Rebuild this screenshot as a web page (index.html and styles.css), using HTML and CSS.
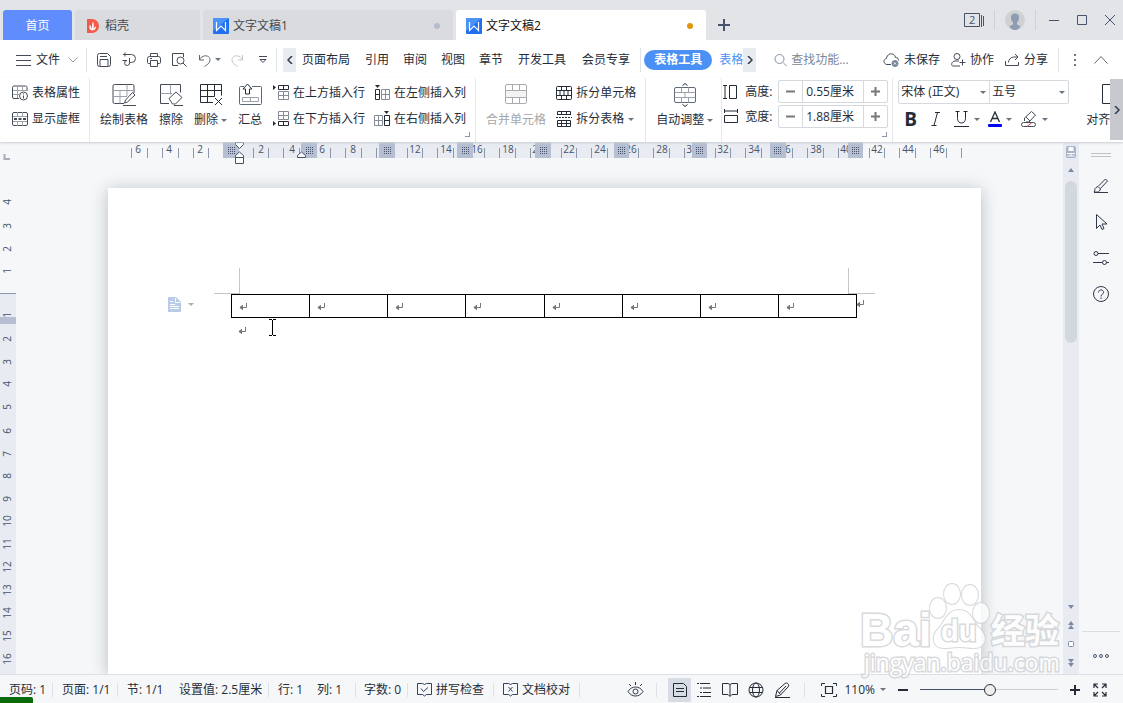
FILE: index.html
```html
<!DOCTYPE html>
<html lang="zh-CN">
<head>
<meta charset="utf-8">
<title>文字文稿2</title>
<link rel="stylesheet" href="styles.css">
</head>
<body>
<svg class="defs" aria-hidden="true">
  <symbol id="mark" viewBox="0 0 8 8"><path d="M7.500 0v4.500H1M3.500 2.500v4L1 4.500z" fill="#777" fill-opacity="0" stroke="#777"/><path d="M4 2v5L.5 4.500z" fill="#777"/></symbol>
  <symbol id="wlogo" viewBox="0 0 16 16"><rect width="16" height="16" rx="1" fill="#1f6ff0"/><path d="M0 0h16L0 13z" fill="#4a94f8"/><path d="M3.500 4v8.500L8 8l4.500 4.500V4" fill="none" stroke="#fff" stroke-width="1.200"/></symbol>
</svg>
<div class="app">
  <header class="titlebar">
    <button class="tab tab-home">首页</button>
    <button class="tab tab-store"><svg width="14" height="16" viewBox="0 0 14 16"><path d="M1 1h5a7 7 0 0 1 0 14H1z" fill="#f25a4a"/><path d="M6 12.500c-3-1-3-4-2-6 .5 2 1.500 2 2 5 0-4 0-6 1-8 1 2 1 5 .5 8 .5-2 1.500-2 2.500-3.500 0 3-1 4-4 4.500z" fill="#fff"/></svg>稻壳</button>
    <button class="tab tab-doc"><svg width="16" height="16"><use href="#wlogo"/></svg><span>文字文稿1</span><i class="dot"></i></button>
    <button class="tab tab-doc active"><svg width="16" height="16"><use href="#wlogo"/></svg><span>文字文稿2</span><i class="dot"></i></button>
    <button class="new-tab" aria-label="新建"><svg width="12" height="12"><path d="M6 0v12M0 6h12" stroke="#46536b" stroke-width="2"/></svg></button>
    <div class="window-tools">
      <button aria-label="窗口列表"><svg width="21" height="15" viewBox="0 0 21 15" fill="none" stroke="#46536b"><path d="M.5.500h15v13H.500zM17.500 2v12M19.500 3v10"/><text x="5" y="11" font-size="11" fill="#46536b" stroke="none">2</text></svg></button>
      <i class="sep"></i>
      <button aria-label="账户"><svg width="20" height="20" viewBox="0 0 20 20"><circle cx="10" cy="10" r="10" fill="#d0d1d3"/><path d="M10 3.500c3 0 4.500 2 4 5-.3 2-1 3-2 4v2l3.500 1.500c-1 2.500-3 4-5.500 4s-5-1.500-5.500-4L8 14.500v-2c-1-1-1.700-2-2-4-.5-3 1-5 4-5z" fill="#8f9db2"/></svg></button>
      <i class="sep"></i>
      <button aria-label="最小化"><svg width="12" height="12"><path d="M1 6.500h10" stroke="#46536b"/></svg></button>
      <button aria-label="最大化"><svg width="12" height="12"><path d="M1.500 1.500h9v9h-9z" fill="none" stroke="#46536b"/></svg></button>
      <button aria-label="关闭"><svg width="12" height="12"><path d="M1 1l10 10M11 1L1 11" stroke="#46536b"/></svg></button>
    </div>
  </header>

  <nav class="menubar">
    <button class="file"><svg width="15" height="12"><path d="M0 1.500h15M0 6.500h15M0 11.500h15" stroke="#444b57"/></svg>文件<svg class="file-chev" width="10" height="6"><path d="M.5.500L5 5 9.500.500" fill="none" stroke="#9aa0a8"/></svg></button>
    <i class="sep"></i>
    <div class="quick">
      <button aria-label="保存"><svg width="16" height="16" viewBox="0 0 16 16" fill="none" stroke="#444b57"><path d="M1.500 3.500a2 2 0 0 1 2-2h8l3 3v8a2 2 0 0 1-2 2h-9a2 2 0 0 1-2-2zM4 14V7.500h8V14M4 4.500h7"/></svg></button>
      <button aria-label="输出"><svg width="16" height="16" viewBox="0 0 16 16" fill="none" stroke="#444b57"><path d="M2 2.500h8.500a4 4 0 0 1 0 8H8.500V6M8.500 10.500a2.500 2.500 0 1 1-2.500-2M1.500 8.500H6M4 .500v4"/></svg></button>
      <button aria-label="打印"><svg width="16" height="16" viewBox="0 0 16 16" fill="none" stroke="#444b57"><path d="M4.500 5V1.500h7V5M4 11.500H2.500a1 1 0 0 1-1-1V6.500a2 2 0 0 1 2-2h9a2 2 0 0 1 2 2v4a1 1 0 0 1-1 1H12M4.500 8.500h7v6h-7zM4 6.500h2"/></svg></button>
      <button aria-label="打印预览"><svg width="16" height="16" viewBox="0 0 16 16" fill="none" stroke="#444b57"><path d="M7 13.500H1.500v-12h11V5"/><circle cx="9.500" cy="8.500" r="3.500"/><path d="M12 11l3.500 3.500"/></svg></button>
      <button class="with-caret" aria-label="撤销"><svg width="14" height="16" viewBox="0 0 14 16" fill="none" stroke="#5f6875"><path d="M1.500 3v5H6M1.500 8C4 2 12 3 12 7.500S8 13 6.500 14.500"/></svg><i class="caret"></i></button>
      <button aria-label="恢复"><svg width="14" height="16" viewBox="0 0 14 16" fill="none" stroke="#c3c7cd"><path d="M12.500 3v5H8M12.500 8C10 2 2 3 2 7.500S6 13 7.500 14.500"/></svg></button>
      <button aria-label="自定义"><svg width="10" height="8" viewBox="0 0 10 8" fill="none" stroke="#444b57"><path d="M1 .500h8M2 3.500l3 3 3-3z"/></svg></button>
    </div>
    <i class="sep"></i>
    <button class="scroll-tab" aria-label="向左"><svg width="6" height="8"><path d="M5 0L1 4l4 4" fill="none" stroke="#30394a" stroke-width="1.500"/></svg></button>
    <div class="tabs">
      <button class="wide">页面布局</button><button>引用</button><button>审阅</button><button>视图</button><button>章节</button><button class="wide">开发工具</button><button class="wide">会员专享</button>
    </div>
    <i class="sep"></i>
    <button class="pill">表格工具</button>
    <button class="more-tab">表格</button>
    <button class="scroll-tab" aria-label="向右"><svg width="6" height="8"><path d="M1 0l4 4-4 4" fill="none" stroke="#30394a" stroke-width="1.500"/></svg></button>
    <label class="search"><svg width="13" height="14" viewBox="0 0 13 14" fill="none" stroke="#8791a3"><circle cx="5.500" cy="6" r="4.500"/><path d="M9 9.500l3.500 3.500"/></svg><input type="text" placeholder="查找功能..." aria-label="查找功能"></label>
    <div class="share">
      <button><svg width="17" height="14" viewBox="0 0 17 14" fill="none" stroke="#444b57"><path d="M8 11.500H4C0 11 0 6 3.500 5.500 4-.500 12-.500 12.500 4.500c2 0 3 1 3 3"/><circle cx="12" cy="10.500" r="3" fill="#7a8499" stroke="#7a8499"/><path d="M11 9.500l2 2M13 9.500l-2 2" stroke="#fff"/></svg>未保存</button>
      <button><svg width="15" height="14" viewBox="0 0 15 14" fill="none" stroke="#444b57"><circle cx="6" cy="3.500" r="3"/><path d="M8 8H4c-4 .5-4 5-2 5h7M8.500 9.500h6M11.500 6.500v6"/></svg>协作</button>
      <button><svg width="15" height="14" viewBox="0 0 15 14" fill="none" stroke="#444b57"><path d="M.5 8v4.500h13V9M3.500 9.500c0-3 2-5 5-5.500h4M10 1l3 3-3 3"/></svg>分享</button>
    </div>
    <i class="sep"></i>
    <button class="dots" aria-label="更多"><svg width="2" height="12"><path d="M0 1h2M0 6h2M0 11h2" stroke="#6c7482" stroke-width="2"/></svg></button>
    <button aria-label="折叠功能区"><svg width="14" height="8"><path d="M.5 7.500l6.500-7 6.500 7" fill="none" stroke="#5f6875"/></svg></button>
  </nav>

  <section class="ribbon">
    <div class="group g-props">
      <button class="item"><svg width="16" height="16" viewBox="0 0 16 16" fill="none" stroke="#444b57"><path d="M7 13.500H2a1.500 1.500 0 0 1-1.500-1.500V2.500A1.500 1.500 0 0 1 2 1h11.500A1.500 1.500 0 0 1 15 2.500V6"/><path d="M1 5.500h14M5.500 1v12M1 9.500h6M10.500 1v5" stroke="#9ba1ab"/><circle cx="11.500" cy="11" r="4"/><path d="M11.500 8.500v1M11.500 10.500v3"/></svg>表格属性</button>
      <button class="item"><svg width="16" height="16" viewBox="0 0 16 16" fill="none" stroke="#444b57"><rect x=".5" y="1.500" width="15" height="13" rx="1.500"/><path d="M5.500 1v4M10.500 1v4M5.500 11v4M10.500 11v4M1 5.500h14M1 10.500h14" stroke="#9ba1ab"/><path d="M2 8h3M6.500 8h3M11 8h3" stroke-width="2"/></svg>显示虚框</button>
    </div>
    <div class="group g-insert">
      <button class="big"><svg width="24" height="24" viewBox="0 0 24 24" fill="none" stroke="#444b57"><path d="M12 20.500H2.500a1.500 1.500 0 0 1-1.500-1.500V3a1.500 1.500 0 0 1 1.500-1.500h18A1.500 1.500 0 0 1 22 3v7"/><path d="M1 7.500h21M8 7.500v13M15 1.500V13M1 13.500h14" stroke="#9ba1ab"/><path d="M12.500 20l1-3 7-7.500 2.500 2.500-7.500 7-3 1zM11 22.500h13"/></svg><span>绘制表格</span></button>
      <button class="big"><svg width="24" height="24" viewBox="0 0 24 24" fill="none" stroke="#444b57"><path d="M10 20.500H1.500v-19h20v8"/><path d="M1.500 10.500H13M11.500 1.500v10" stroke="#9ba1ab"/><path d="M10 15.500l7-6.500 6 5.500-6.500 6.500h-3zM15 22.500h9"/></svg><span>擦除</span></button>
      <button class="big"><svg width="24" height="24" viewBox="0 0 24 24" fill="none" stroke="#252c38"><path d="M14 19.500H1.500v-18h21v11M1.500 7.500h21M1.500 13.500h14M8.500 1.500v18M15.500 1.500v12M16 15l7 7M23 15l-7 7"/></svg><span>删除<i class="caret"></i></span></button>
      <button class="big"><svg width="24" height="24" viewBox="0 0 24 24" fill="none" stroke="#5f6875"><path d="M6 3.500H2.500a1 1 0 0 0-1 1v16a1 1 0 0 0 1 1h20a1 1 0 0 0 1-1v-16a1 1 0 0 0-1-1H14"/><path d="M4.500 14.500h16v4h-16zM12.500 14.500v4" stroke="#9ba1ab"/><path d="M7.500 11V6H5l4.500-5L14 6h-2.500v5z" stroke="#252c38"/></svg><span>汇总</span></button>
      <div class="pair">
        <button class="item"><svg width="16" height="16" viewBox="0 0 16 16" fill="none" stroke="#252c38"><path d="M5.500.500h10v4h-10zM10.500.500v4"/><path d="M5.500 6.500h10v8h-10zM5.500 10.500h10M10.500 6.500v8" stroke="#858c97"/><path d="M0 0l3 2.500L0 5z" fill="#252c38" stroke="none"/></svg>在上方插入行</button>
        <button class="item"><svg width="16" height="16" viewBox="0 0 16 16" fill="none" stroke="#252c38"><path d="M5.500 10.500h10v4h-10zM10.500 10.500v4"/><path d="M5.500.500h10v8h-10zM5.500 4.500h10M10.500.500v8" stroke="#858c97"/><path d="M0 10l3 2.500L0 15z" fill="#252c38" stroke="none"/></svg>在下方插入行</button>
      </div>
      <div class="pair">
        <button class="item"><svg width="16" height="16" viewBox="0 0 16 16" fill="none" stroke="#252c38"><path d="M1.500 4.500h4v10h-4zM1.500 9.500h4"/><path d="M7.500 4.500h8v10h-8zM7.500 9.500h8M11.500 4.500v10" stroke="#858c97"/><path d="M1 0h5L3.500 3z" fill="#252c38" stroke="none"/></svg>在左侧插入列</button>
        <button class="item"><svg width="16" height="16" viewBox="0 0 16 16" fill="none" stroke="#252c38"><path d="M10.500 4.500h5v10h-5zM10.500 9.500h5"/><path d="M.5 4.500h8v10h-8zM.5 9.500h8M4.500 4.500v10" stroke="#858c97"/><path d="M10 0h5l-2.500 3z" fill="#252c38" stroke="none"/></svg>在右侧插入列</button>
      </div>
      <i class="launcher"></i>
    </div>
    <div class="group g-merge">
      <button class="big" disabled><svg width="24" height="24" viewBox="0 0 24 24" fill="none" stroke="#a9abae"><path d="M1.500 7.500h21v7h-21z" fill="#f3f3f3"/><rect x="1.500" y="1.500" width="21" height="19" rx="1.500"/><path d="M8.500 1.500v6M15.500 1.500v6M8.500 14.500v6M15.500 14.500v6"/></svg><span>合并单元格</span></button>
      <div class="pair">
        <button class="item"><svg width="16" height="16" viewBox="0 0 16 16" fill="none" stroke="#252c38"><rect x=".5" y="1.500" width="15" height="13" rx="1"/><path d="M.5 5.500h15v5H.500M5.500 1.500v4M10.500 1.500v4M8 5.500v5M5.500 10.500v4M10.500 10.500v4M4 5.500v5M12 5.500v5"/></svg>拆分单元格</button>
        <button class="item"><svg width="16" height="16" viewBox="0 0 16 16" fill="none" stroke="#252c38"><path d="M1.500 4V.500h13V4M1.500 3.500h13M5.500.500v3M10.500.500v3M1.500 9.500h13v6h-13zM1.500 12.500h13M5.500 9.500v6M10.500 9.500v6"/><path d="M0 6.500h16" stroke-dasharray="2 1"/></svg>拆分表格<i class="caret"></i></button>
      </div>
    </div>
    <div class="group g-auto">
      <button class="big"><svg width="24" height="24" viewBox="0 0 24 24" fill="none" stroke="#5f6875"><rect x="1.500" y="4.500" width="21" height="15" rx="1.500"/><path d="M1.500 9.500h21M1.500 14.500h21M8.500 4.500v5M15.500 4.500v5M12 9.500v5M8.500 14.500v5M15.500 14.500v5" stroke="#9ba1ab"/><path d="M9.500 2.500L12 .500l2.500 2M9.500 21.500l2.500 2 2.500-2" stroke="#252c38"/></svg><span>自动调整<i class="caret"></i></span></button>
    </div>
    <div class="group g-size">
      <div class="size-row"><svg width="16" height="16" viewBox="0 0 16 16" fill="none" stroke="#252c38"><path d="M0 1.500h4M2 1.500v13M0 14.500h4M6.500 1.500h7v13h-7z"/></svg><label for="h">高度:</label>
        <div class="spin"><button aria-label="减小高度"><svg width="9" height="9"><path d="M0 4.500h9" stroke="#777" stroke-width="2"/></svg></button><input id="h" type="text" value="0.55厘米"><button aria-label="增大高度"><svg width="9" height="9"><path d="M0 4.500h9M4.500 0v9" stroke="#777" stroke-width="2"/></svg></button></div></div>
      <div class="size-row"><svg width="16" height="16" viewBox="0 0 16 16" fill="none" stroke="#252c38"><path d="M1.500 0v4M1.500 2h13M14.500 0v4M1.500 6.500h13v7h-13z"/></svg><label for="w">宽度:</label>
        <div class="spin"><button aria-label="减小宽度"><svg width="9" height="9"><path d="M0 4.500h9" stroke="#777" stroke-width="2"/></svg></button><input id="w" type="text" value="1.88厘米"><button aria-label="增大宽度"><svg width="9" height="9"><path d="M0 4.500h9M4.500 0v9" stroke="#777" stroke-width="2"/></svg></button></div></div>
      <i class="launcher"></i>
    </div>
    <div class="group g-font">
      <div class="selects">
        <label class="sel sel-font"><select aria-label="字体"><option>宋体 (正文)</option></select></label>
        <label class="sel sel-size"><select aria-label="字号"><option>五号</option></select></label>
      </div>
      <div class="styles">
        <button class="bold">B</button>
        <button aria-label="斜体"><svg width="12" height="16" viewBox="0 0 12 16"><path d="M5 1.500h5M1.500 14.500h5M7.500 1.500L4 14.500" fill="none" stroke="#252c38"/></svg></button>
        <button class="with-caret" aria-label="下划线"><svg width="16" height="16" viewBox="0 0 16 16" fill="none" stroke="#252c38"><path d="M3.500.500v7c0 6 8 6 8 0v-7M1.500.500h4M9.500.500h4M0 15.500h15"/></svg><i class="caret"></i></button>
        <button class="with-caret" aria-label="字体颜色"><svg width="14" height="16" viewBox="0 0 14 16"><path d="M2.500 11L7 1l4.500 10M4 7.500h6" fill="none" stroke="#252c38" stroke-width="1.300"/><rect y="13" width="14" height="3" rx="1" fill="#00f"/></svg><i class="caret"></i></button>
        <button class="with-caret" aria-label="突出显示"><svg width="18" height="16" viewBox="0 0 18 16" fill="none" stroke="#444b57"><path d="M4.500 10v-3l7-6.500 4 3.500-6.500 7H6M6 6l4 4"/><rect x="1.500" y="11.500" width="14" height="4" rx="2"/><path d="M7 15.500l5-4" stroke="#e44"/></svg><i class="caret"></i></button>
      </div>
    </div>
    <div class="group g-align">
      <button class="big"><svg width="24" height="24"><path d="M24 1.500H1.500v19H24" fill="none" stroke="#252c38"/></svg><span>对齐</span></button>
    </div>
    <button class="ribbon-next" aria-label="更多工具"><svg width="6" height="8"><path d="M1 0l4 4-4 4" fill="none" stroke="#30394a" stroke-width="1.500"/></svg></button>
  </section>

  <main class="work">
    <svg class="vruler" width="16" height="532" viewBox="0 0 16 532">
      <path d="M0 151h16v381H0z" fill="#e8ebf1"/><path d="M0 151.500h16" stroke="#8c97ab"/>
      <path d="M0 175h16v7H0z" fill="#b6bfd2"/>
      <path d="M4.500 12v5H10" fill="none" stroke="#a9afba" stroke-width="2"/>
      <g class="num" text-anchor="middle">
        <text transform="translate(11 60) rotate(-90)">4</text><text transform="translate(11 84) rotate(-90)">3</text><text transform="translate(11 107) rotate(-90)">2</text><text transform="translate(11 129) rotate(-90)">1</text>
        <text transform="translate(11 173) rotate(-90)">1</text><text transform="translate(11 197) rotate(-90)">2</text><text transform="translate(11 220) rotate(-90)">3</text><text transform="translate(11 242) rotate(-90)">4</text><text transform="translate(11 265) rotate(-90)">5</text><text transform="translate(11 289) rotate(-90)">6</text><text transform="translate(11 312) rotate(-90)">7</text><text transform="translate(11 334) rotate(-90)">8</text><text transform="translate(11 357) rotate(-90)">9</text><text transform="translate(11 379) rotate(-90)">10</text><text transform="translate(11 402) rotate(-90)">11</text><text transform="translate(11 425) rotate(-90)">12</text><text transform="translate(11 448) rotate(-90)">13</text><text transform="translate(11 471) rotate(-90)">14</text><text transform="translate(11 494) rotate(-90)">15</text><text transform="translate(11 517) rotate(-90)">16</text>
      </g>
    </svg>
    <div class="canvas">
      <svg class="hruler" width="960" height="24" viewBox="16 142 960 24">
        <defs><pattern id="grid" x="0" y="147" width="2" height="2" patternUnits="userSpaceOnUse"><rect width="1" height="1" fill="#46536b"/></pattern></defs>
        <path d="M239 142h609v16H239z" fill="#e8ebf1"/>
        <path d="M131.500 148v10M147.500 148v10M162.500 148v10M178.500 148v10M193.500 148v10M208.500 148v10M253.500 148v10M268.500 148v10M283.500 148v10M299.500 148v10M330.500 148v10M345.500 148v10M361.500 148v10M376.500 148v10M407.500 148v10M422.500 148v10M437.500 148v10M453.500 148v10M484.500 148v10M499.500 148v10M515.500 148v10M530.500 148v10M561.500 148v10M576.500 148v10M591.500 148v10M607.500 148v10M638.500 148v10M653.500 148v10M669.500 148v10M684.500 148v10M715.500 148v10M730.500 148v10M745.500 148v10M761.500 148v10M792.500 148v10M807.500 148v10M823.500 148v10M838.500 148v10M869.500 148v10M884.500 148v10M899.500 148v10M915.500 148v10M930.500 148v10M946.500 148v10M961.500 148v10" stroke="#8c97ab"/>
        <g class="num" text-anchor="middle">
          <text x="138" y="153">6</text><text x="169" y="153">4</text><text x="200" y="153">2</text><text x="261" y="153">2</text><text x="292" y="153">4</text><text x="322" y="153">6</text><text x="353" y="153">8</text><text x="415" y="153">12</text><text x="446" y="153">14</text><text x="477" y="153">16</text><text x="508" y="153">18</text><text x="538" y="153">20</text><text x="569" y="153">22</text><text x="600" y="153">24</text><text x="631" y="153">26</text><text x="662" y="153">28</text><text x="692" y="153">30</text><text x="723" y="153">32</text><text x="754" y="153">34</text><text x="785" y="153">36</text><text x="816" y="153">38</text><text x="846" y="153">40</text><text x="877" y="153">42</text><text x="908" y="153">44</text><text x="939" y="153">46</text>
        </g>
        <path d="M223 142h16v16h-16zM301 142h16v16h-16zM379 142h16v16h-16zM457 142h16v16h-16zM535 142h16v16h-16zM614 142h15v16h-15zM692 142h15v16h-15zM770 142h16v16h-16zM848 142h15v16h-15z" fill="#b6bfd2"/>
        <path d="M227 147h8v7h-8zM305 147h8v7h-8zM383 147h8v7h-8zM461 147h8v7h-8zM539 147h8v7h-8zM617 147h8v7h-8zM696 147h8v7h-8zM774 147h8v7h-8zM852 147h8v7h-8z" fill="url(#grid)"/>
        <path d="M235.500 142.500h8v2l-4 4-4-4zM239.500 152l4 3.500v8h-8v-8zM235.500 157.500h8M301.500 152l4 3.500v2h-8v-2z" fill="#fff" stroke="#46536b"/>
      </svg>
      <article class="page">
        <div class="corners"><i class="corner left"></i><i class="corner right"></i></div>
        <table class="doc-table"><tr><td><svg width="8" height="8"><use href="#mark"/></svg></td><td><svg width="8" height="8"><use href="#mark"/></svg></td><td><svg width="8" height="8"><use href="#mark"/></svg></td><td><svg width="8" height="8"><use href="#mark"/></svg></td><td><svg width="8" height="8"><use href="#mark"/></svg></td><td><svg width="8" height="8"><use href="#mark"/></svg></td><td><svg width="8" height="8"><use href="#mark"/></svg></td><td><svg width="8" height="8"><use href="#mark"/></svg></td></tr></table>
        <p class="para"><svg width="8" height="8"><use href="#mark"/></svg></p>
        <svg class="row-end" width="8" height="8"><use href="#mark"/></svg>
        <button class="float-btn" aria-label="段落布局"><svg width="13" height="15" viewBox="0 0 13 15"><path d="M0 0h8l5 5v10H0z" fill="#b9cbe6"/><path d="M7.500 1v4.500H12M2 4.500h3M2 7.500h5M2 9.500h9M2 11.500h9" fill="none" stroke="#fff"/></svg><i class="caret"></i></button>
        <svg class="ibeam" width="7" height="17" viewBox="0 0 7 17"><path d="M0 .500h3M4 .500h3M3.500 1v15M0 16.500h3M4 16.500h3" stroke="#000"/></svg>
      </article>
    </div>
    <div class="scrollbar">
      <svg class="sb-top" width="10" height="12" viewBox="0 0 10 12"><rect x=".5" y=".5" width="9" height="11" rx="1" fill="#a9b4ca" stroke="#a9b4ca"/><path d="M2.500 1v4h5V1zM1 7h8v1H5.500v1.500h3v1h-7v-1h3V8H1z" fill="#fff"/></svg>
      <svg class="sb-up" width="6" height="4"><path d="M0 4l3-4 3 4z" fill="#7d8aa5"/></svg>
      <i class="thumb"></i>
      <div class="sb-foot">
        <svg width="6" height="4"><path d="M0 0h6L3 4z" fill="#7d8aa5"/></svg>
        <svg width="6" height="8"><path d="M0 4l3-4 3 4zM0 8l3-4 3 4z" fill="#7d8aa5"/></svg>
        <svg width="6" height="6"><rect x=".5" y=".5" width="5" height="5" rx="1" fill="#fff" stroke="#7d8aa5"/></svg>
        <svg width="6" height="8"><path d="M0 0h6L3 4zM0 4h6L3 8z" fill="#7d8aa5"/></svg>
      </div>
    </div>
    <aside class="side">
      <svg width="20" height="5"><path d="M0 .500h20M0 3.500h20" stroke="#bdc2cb"/></svg>
      <button aria-label="样式"><svg width="16" height="16" viewBox="0 0 16 16" fill="none" stroke="#30394a"><path d="M1 14c1.500-1 0-3.500 2-4.500l2-1 2.500 2.500-1 2c-1 1.500-3.500 1-5.500 1zM5.500 8l7-7 2 2-7 7.500M1 14.500h14"/></svg></button>
      <button aria-label="选择"><svg width="16" height="16" viewBox="0 0 16 16" fill="none" stroke="#30394a"><path d="M3.500.500v14l3.500-3.500 2 4.500 2-1-2-4.500h5z"/></svg></button>
      <button aria-label="属性"><svg width="16" height="16" viewBox="0 0 16 16" fill="none" stroke="#30394a"><circle cx="3" cy="3.500" r="2"/><circle cx="11.500" cy="12.500" r="2"/><path d="M5 3.500h11M0 12.500h9.500M13.500 12.500H16"/></svg></button>
      <button aria-label="帮助"><svg width="16" height="16" viewBox="0 0 16 16" fill="none" stroke="#30394a"><circle cx="8" cy="8" r="7.500"/><path d="M5.500 6.500c0-3.500 5-3.500 5 0 0 2-2.500 1.500-2.500 4M8 11.500v1.500"/></svg></button>
      <div class="side-foot"><button aria-label="更多"><svg width="16" height="4" viewBox="0 0 16 4" fill="none" stroke="#46536b"><circle cx="2" cy="2" r="1.500"/><circle cx="8" cy="2" r="1.500"/><circle cx="14" cy="2" r="1.500"/></svg></button></div>
    </aside>
  </main>

  <footer class="status">
    <span class="s-38">页码: 1</span><i class="sep"></i>
    <span class="s-50">页面: 1/1</span><i class="sep"></i>
    <span class="s-38">节: 1/1</span><span class="s-84">设置值: 2.5厘米</span><i class="sep"></i>
    <span class="s-26">行: 1</span><span class="s-26 s-col">列: 1</span><i class="sep"></i>
    <span class="s-38 tight">字数: 0</span><i class="sep"></i>
    <button><svg width="15" height="15" viewBox="0 0 15 15" fill="none" stroke="#33405e"><path d="M.5 1.500h5l2 1 2-1h5v11h-5l-2 1.500-2-1.500h-5zM4 6.500l2.500 3 4.500-4"/></svg>拼写检查</button><i class="sep"></i>
    <button><svg width="15" height="15" viewBox="0 0 15 15" fill="none" stroke="#33405e"><path d="M.5 1.500h5l2 1 2-1h5v11h-5l-2 1.500-2-1.500h-5zM5.500 5l4 4.500M9.500 5l-4 4.500"/></svg>文档校对</button><i class="sep"></i>
    <div class="views">
      <button class="eye" aria-label="护眼模式"><svg width="17" height="16" viewBox="0 0 17 16" fill="none" stroke="#30394a"><path d="M1 9.500c3.500-6 11.500-6 15 0-3.500 6-11.500 6-15 0zM8.500 0v3M2 2l2 2M15 2l-2 2"/><circle cx="8.500" cy="9.500" r="2.500"/></svg></button><i class="sep"></i>
      <button class="on" aria-label="页面视图"><svg width="16" height="16" viewBox="0 0 16 16" fill="none" stroke="#252c38"><path d="M1.500 1.500h10l3 3v10h-13zM4 6.500h8M4 9.500h8"/></svg></button>
      <button aria-label="大纲"><svg width="16" height="16" viewBox="0 0 16 16" stroke="#252c38"><path d="M1 1.500h2M4 1.500h10M4 6h2M7 6h8M4 10.500h2M7 10.500h8M1 14.500h2M4 14.500h11"/></svg></button>
      <button aria-label="阅读版式"><svg width="16" height="16" viewBox="0 0 16 16" fill="none" stroke="#252c38"><path d="M.5 1.500h5.500l2 1 2-1h5.500v11H10l-2 2-2-2H.500zM8 3v11"/></svg></button>
      <button aria-label="Web 版式"><svg width="16" height="16" viewBox="0 0 16 16" fill="none" stroke="#252c38"><circle cx="8" cy="8" r="7"/><ellipse cx="8" cy="8" rx="3.500" ry="7"/><path d="M1.500 5.500h13M1.500 10.500h13"/></svg></button>
      <button aria-label="写作模式"><svg width="17" height="16" viewBox="0 0 17 16" fill="none" stroke="#252c38"><path d="M1.500 14.500L3 8.500l8-7c2-1.500 5 1 3 3.500L6.500 13zM3 8.500l3.500 4M5.500 11l6.500-7M1 15.500h15"/></svg></button>
      <i class="sep"></i>
    </div>
    <div class="zoom">
      <button aria-label="适合页面"><svg width="16" height="16" viewBox="0 0 16 16" fill="none" stroke="#252c38"><path d="M.5 4V1.500H4M12 1.500h3.500V4M.5 12v2.500H4M12 14.500h3.500V12"/><path d="M4.500 4.500h7v7h-7z" stroke-width="1.200"/></svg></button>
      <button class="pct">110%<i class="caret"></i></button>
      <button aria-label="缩小"><svg width="10" height="10"><path d="M0 5h10" stroke="#252c38" stroke-width="2"/></svg></button>
      <input type="range" min="0" max="100" value="51" aria-label="显示比例">
      <button aria-label="放大"><svg width="10" height="10"><path d="M0 5h10M5 0v10" stroke="#252c38" stroke-width="2"/></svg></button>
      <button aria-label="全屏"><svg width="14" height="14" viewBox="0 0 14 14" fill="none" stroke="#252c38" stroke-width="1.200"><path d="M1 5V1h4M9 1h4v4M13 9v4H9M5 13H1V9M1 1l4 4M13 1L9 5M13 13L9 9M1 13l4-4"/></svg></button>
    </div>
    <i class="progress"></i>
  </footer>

  <svg class="watermark" width="210" height="100" viewBox="0 0 210 100" aria-hidden="true">
    <g fill="#fff" stroke="#cfd1d4" stroke-width="2" paint-order="stroke">
      <ellipse cx="83" cy="27" rx="8" ry="10"/><ellipse cx="97" cy="13" rx="8" ry="10"/><ellipse cx="115" cy="14" rx="8" ry="10"/><ellipse cx="126" cy="32" rx="8" ry="10"/>
      <path d="M104 29c12 0 14 12 20 18 10 9 6 20-4 20-8 0-10-1-16-1s-8 1-15 1c-11 0-14-11-5-20 6-6 8-18 20-18z"/>
      <g class="wm-text" stroke-width="3"><text class="wm-bai" x="5" y="65">Bai</text><text class="wm-du" x="86" y="60">du</text><text class="wm-cn" x="136" y="62">经验</text><text class="wm-url" x="9" y="90">jingyan.baidu.com</text></g>
    </g>
  </svg>
</div>
</body>
</html>
```
FILE: styles.css
```css
* { box-sizing: border-box; }
body { margin: 0; }
button, input, select { font: inherit; color: inherit; border: 0; background: none; padding: 0; margin: 0; }
button { display: flex; align-items: center; white-space: nowrap; flex: none; }
svg { display: block; flex: none; }
.defs { position: absolute; width: 0; height: 0; }
.app {
  position: relative;
  height: 100vh;
  display: flex;
  flex-direction: column;
  overflow: hidden;
  background: #f5f7f9;
  color: #252c38;
  font: 12px/16px "Open Sans", "Noto Sans CJK SC", sans-serif;
}
.sep { flex: none; width: 1px; height: 24px; background: #dfe2e6; }
.caret { flex: none; border: 3px solid transparent; border-top: 3px solid #6c7482; border-bottom: 0; }

/* title bar */
.titlebar { display: flex; align-items: flex-end; height: 40px; padding-left: 3px; background: #e2e4e8; flex: none; }
.tab { height: 30px; padding-top: 2px; margin-right: 3px; background: #d9dbdf; border-radius: 3px 3px 0 0; color: #46494f; }
.tab-home { width: 69px; justify-content: center; background: #608dfd; color: #fff; }
.tab-store { flex: 0 1 125px; padding-left: 11px; gap: 5px; }
.tab-doc { flex: 0 1 250px; padding-left: 10px; padding-right: 13px; gap: 4px; }
.tab-doc .dot { margin-left: auto; width: 6px; height: 6px; border-radius: 50%; background: #b4bccd; }
.tab-doc.active { background: #fff; color: #111; }
.tab-doc.active .dot { background: #e0960c; }
.new-tab { height: 30px; padding-left: 9px; }
.window-tools { margin-left: auto; align-self: stretch; display: flex; align-items: center; padding-right: 7px; }
.window-tools .sep { height: 20px; margin: 0 10px 0 9px; background: #cdd0d5; }
.window-tools .sep ~ .sep { margin: 0 12px 0 10px; }
.window-tools .sep ~ .sep ~ button + button { margin-left: 16px; }

/* menu bar */
.menubar { display: flex; align-items: center; height: 38px; padding: 1px 15px 0 16px; background: #fff; flex: none; }
.menubar .file { gap: 5px; margin-right: 8px; }
.file-chev { margin-left: 3px; }
.quick { display: flex; align-items: center; gap: 9px; margin: 0 8px 0 9px; }
.quick .with-caret { gap: 3px; margin-left: 2px; }
.quick button:last-child { margin-left: 5px; }
.with-caret { gap: 4px; }
.scroll-tab { width: 13px; height: 24px; justify-content: center; background: #e8ebf0; }
.quick + .sep + .scroll-tab { margin-left: 6px; }
.tabs { display: flex; margin: 0 2px 0 -2px; }
.tabs button { padding: 0 7px; }
.tabs .wide { padding: 0 8px; }
.pill { height: 20px; padding: 0 10px; margin: 0 7px 0 3px; border-radius: 10px; background: #4a90f5; color: #fff; font-weight: bold; }
.more-tab { color: #4a90f5; width: 24px; overflow: hidden; }
.search { display: flex; align-items: center; flex: 1 1 95px; gap: 4px; margin-left: 18px; min-width: 0; }
.search input { width: 70px; outline: 0; }
.search input::placeholder { color: #7d8796; opacity: 1; }
.share { display: flex; gap: 11px; margin-right: 10px; }
.share button { gap: 4px; }
.dots { margin: 0 18px 0 15px; }

/* ribbon */
.ribbon { position: relative; z-index: 1; display: flex; align-items: stretch; height: 64px; background: #fff; box-shadow: 0 1px 2px #c9ccd1; flex: none; }
.group { position: relative; display: flex; flex: none; padding: 2px 9px 8px; border-right: 1px solid #e6e8eb; }
.item { height: 24px; gap: 4px; padding-top: 2px; }
.big { flex-direction: column; padding-top: 3px; gap: 5px; }
.big span { display: flex; align-items: center; gap: 3px; }
.pair { display: flex; flex-direction: column; gap: 2px; }
.g-props { flex-direction: column; gap: 2px; padding-left: 12px; }
.g-insert { padding-left: 10px; gap: 11px; }
.g-insert .pair + .pair { margin-left: -2px; }
.g-merge { padding-left: 10px; gap: 10px; }
.g-merge .big { color: #a3a6aa; }
.g-auto { padding-left: 10px; padding-right: 8px; }
.launcher { position: absolute; right: 5px; bottom: 5px; width: 5px; height: 5px; border: solid #8c97ab; border-width: 0 1px 1px 0; }
.g-size { flex-direction: column; gap: 2px; padding: 2px 4px 8px 1px; }
.size-row { display: flex; align-items: center; height: 23px; }
.size-row label { width: 33px; margin-left: 6px; }
.spin { display: flex; height: 23px; border: 1px solid #d5d8dd; border-radius: 2px; }
.spin button { width: 23px; justify-content: center; }
.spin input { width: 62px; padding-left: 3px; border: solid #d5d8dd; border-width: 0 1px; }
.g-font { flex-direction: column; padding: 2px 5px 8px; gap: 3px; border-right: 0; }
.selects { display: flex; border: 1px solid #d5d8dd; border-radius: 2px; }
.sel { position: relative; height: 22px; }
.sel::after { content: ""; position: absolute; right: 3px; top: 10px; border: 3px solid transparent; border-top-color: #6c7482; border-bottom: 0; pointer-events: none; }
.sel select { appearance: none; height: 100%; width: 100%; padding-left: 2px; }
.sel-font { width: 91px; border-right: 1px solid #d5d8dd; }
.sel-size { width: 78px; }
.styles { display: flex; align-items: center; height: 24px; padding-left: 6px; gap: 12px; }
.styles .bold { font-size: 19px; font-weight: bold; width: 14px; }
.styles .with-caret + .with-caret { margin-left: -4px; }
.g-align { flex: 1 1 0; overflow: hidden; padding-left: 12px; padding-right: 0; border-right: 0; min-width: 0; }
.g-align .big { align-items: flex-start; }
.g-align .big svg { margin-left: 15px; }
.ribbon-next { width: 13px; height: 61px; margin-top: 1px; justify-content: center; background: #c7c9cf; }

/* work area */
.work { flex: 1; min-height: 0; display: flex; overflow: hidden; }
.num { font: 10px "Open Sans", sans-serif; fill: #46536b; }
.vruler { align-self: flex-start; }
.canvas { flex: 1; min-width: 0; display: flex; flex-direction: column; }
.page {
  position: relative;
  flex: 1;
  margin: 22px 82px 0 92px;
  padding: 80px 124px 0 123px;
  background: #fff;
  box-shadow: 0 2px 16px #b9bcc0;
}
.corners { display: flex; justify-content: space-between; height: 26px; margin: 0 -18px 0 -17px; }
.corner { width: 26px; border-bottom: 1px solid #c6c6c6; }
.corner.left { border-right: 1px solid #c6c6c6; }
.corner.right { width: 27px; border-left: 1px solid #c6c6c6; }
.doc-table { width: 100%; table-layout: fixed; border-collapse: collapse; }
.doc-table td { border: 1px solid #000; padding: 2px 0 0 7px; height: 23px; }
.para { margin: 0; padding: 9px 0 0 7px; }
.row-end { position: absolute; right: 117px; top: 112px; }
.float-btn { position: absolute; left: 60px; top: 109px; gap: 7px; }
.float-btn .caret { border-top-color: #a9abae; }
.ibeam { position: absolute; left: 161px; top: 131px; }

.scrollbar { width: 16px; display: flex; flex-direction: column; align-items: center; padding: 4px 0 7px; background: #e8ebf1; flex: none; }
.sb-up { margin-top: 10px; }
.thumb { width: 12px; height: 162px; margin-top: 9px; border-radius: 6px; background: #d3d7df; }
.sb-foot { margin-top: auto; display: flex; flex-direction: column; gap: 12px; }
.side { width: 44px; flex: none; display: flex; flex-direction: column; align-items: center; gap: 20px; padding-top: 11px; }
.side-foot { margin-top: auto; width: 38px; height: 43px; padding-top: 6px; border-top: 1px solid #d9dce1; display: flex; justify-content: center; }

/* status bar */
.status { position: relative; display: flex; align-items: center; height: 29px; padding-top: 1px; border-top: 1px solid #dcdfe5; background: #f5f7f9; flex: none; white-space: nowrap; }
.status > span { flex: none; margin: 0 5px 0 9px; }
.status .sep { height: 14px; }
.s-26 { width: 26px; }
.s-38 { width: 38px; }
.s-50 { width: 50px; }
.s-84 { width: 84px; }
.status > .s-col { margin-left: 8px; margin-right: 12px; }
.status > .tight { margin-left: 8px; }
.status > button { gap: 4px; margin: 0 9px; }
.views { display: flex; align-items: center; margin-left: auto; }
.views button { width: 26px; justify-content: center; }
.views .on { width: 23px; height: 24px; background: #d8dce5; }
.views .eye { margin-right: 8px; }
.views .eye + .sep { margin-right: 11px; }
.views .sep:last-child { margin-left: 9px; }
.zoom { display: flex; align-items: center; margin: 0 16px; }
.pct { margin: 0 12px 0 7px; gap: 5px; }
.zoom input { appearance: none; width: 138px; height: 14px; margin: 0 12px; background: linear-gradient(90deg, #46536b 51%, #ccd0d7 51%) center / 100% 1px no-repeat; }
.zoom input::-webkit-slider-thumb { appearance: none; width: 12px; height: 12px; border: 1px solid #333; border-radius: 50%; background: #eee; }
.zoom input + button { margin-right: 13px; }
.progress { position: absolute; left: 0; bottom: 0; width: 33px; height: 6px; background: #0b6b0b; border-radius: 0 2px 0 0; }

/* watermark over the sheet */
.watermark { position: absolute; right: 58px; bottom: 22px; z-index: 2; opacity: 0.8; overflow: visible; pointer-events: none; }
.wm-text { font-family: "Liberation Sans", "Noto Sans CJK SC", sans-serif; font-weight: bold; }
.wm-bai { font-size: 46px; }
.wm-du { font-size: 29px; }
.wm-cn { font-size: 34px; }
.wm-url { font: 23px "Open Sans", sans-serif; }
```
